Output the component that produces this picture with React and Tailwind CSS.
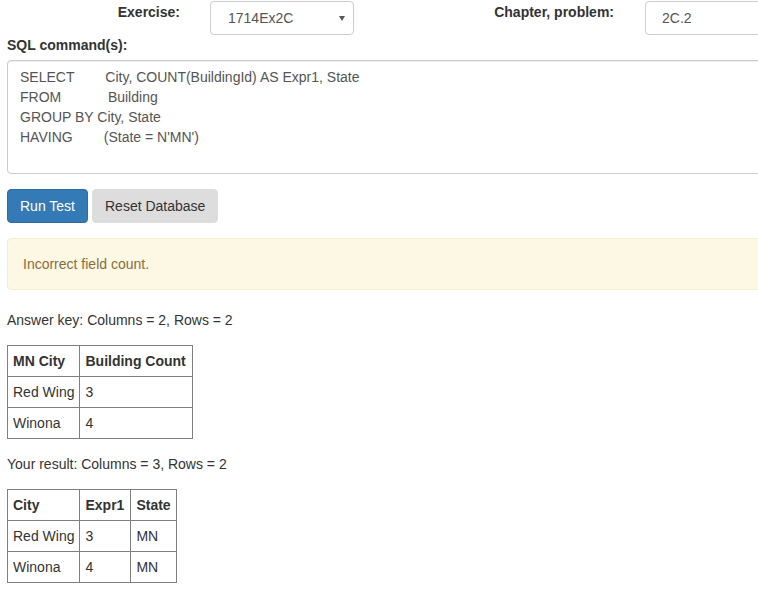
const font = "font-['Liberation_Sans',Arial,sans-serif]";

function ResultTable({ head, rows, wide = [] }) {
  return (
    <table className="border-collapse border border-[#808080] text-[14px] leading-[20px] text-[#333]">
      <thead>
        <tr>
          {head.map((h, i) => (
            <th
              key={h}
              className={`border border-[#808080] py-[5px] pl-[5px] text-left font-bold ${wide.includes(i) ? "pr-[6px]" : "pr-[5px]"}`}
            >
              {h}
            </th>
          ))}
        </tr>
      </thead>
      <tbody>
        {rows.map((r, i) => (
          <tr key={i}>
            {r.map((c, j) => (
              <td key={j} className="border border-[#808080] p-[5px] whitespace-nowrap">
                {c}
              </td>
            ))}
          </tr>
        ))}
      </tbody>
    </table>
  );
}

export default function App() {
  const sql = [
    "SELECT        City, COUNT(BuildingId) AS Expr1, State",
    "FROM            Building",
    "GROUP BY City, State",
    "HAVING        (State = N'MN')",
  ];

  return (
    <div className={`${font} h-[599px] w-[758px] overflow-hidden bg-white text-[14px] leading-[20px] text-[#333]`}>
      <div className="w-[1000px] pl-[7px]">
        {/* top row */}
        <div className="flex items-start pt-px">
          <div className="mt-px w-[173px] text-right font-bold">Exercise:</div>
          <div className="ml-[30px] flex h-[34px] w-[144px] items-center justify-between rounded-[4px] border border-[#ccc] pl-[17px] pr-[8px] text-[#555]">
            <span>1714Ex2C</span>
            <span className="h-0 w-0 border-x-[3px] border-t-[5px] border-x-transparent border-t-[#555]" />
          </div>
          <div className="mt-px w-[260px] text-right font-bold">Chapter, problem:</div>
          <div className="ml-[31px] flex h-[34px] w-[200px] items-center rounded-[4px] border border-[#ccc] pl-[16px] text-[#555]">
            2C.2
          </div>
        </div>

        <div className="mb-[5px] font-bold">SQL command(s):</div>
        <div className="h-[114px] w-[900px] rounded-[4px] border border-[#ccc] px-[12px] py-[6px] text-[#555] shadow-[inset_0_1px_1px_rgba(0,0,0,0.075)]">
          {sql.map((line) => (
            <div key={line} className="whitespace-pre">
              {line}
            </div>
          ))}
        </div>

        <div className="mt-[15px] flex gap-[4px]">
          <button className="h-[34px] rounded-[4px] border border-[#2e6da4] bg-[#337ab7] px-[12px] text-white">
            Run Test
          </button>
          <button className="h-[34px] rounded-[4px] border border-[#ddd] bg-[#ddd] px-[12px] text-[#333]">
            Reset Database
          </button>
        </div>

        <div className="mt-[15px] w-[900px] rounded-[4px] border border-[#faebcc] bg-[#fcf8e3] p-[15px] text-[#8a6d3b]">
          Incorrect field count.
        </div>

        <div className="mt-[20px] mb-[15px]">Answer key: Columns = 2, Rows = 2</div>
        <ResultTable
          head={["MN City", "Building Count"]}
          wide={[1]}
          rows={[
            ["Red Wing", "3"],
            ["Winona", "4"],
          ]}
        />

        <div className="my-[15px]">Your result: Columns = 3, Rows = 2</div>
        <ResultTable
          head={["City", "Expr1", "State"]}
          wide={[1]}
          rows={[
            ["Red Wing", "3", "MN"],
            ["Winona", "4", "MN"],
          ]}
        />
      </div>
    </div>
  );
}
